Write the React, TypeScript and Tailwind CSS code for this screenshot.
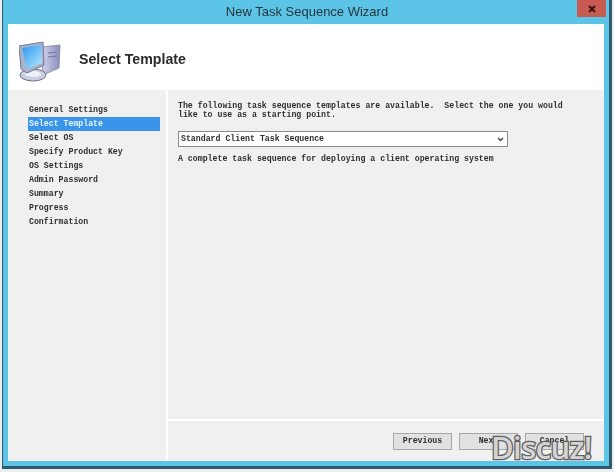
import React from "react";

const steps = ["General Settings", "Select Template", "Select OS", "Specify Product Key", "OS Settings", "Admin Password", "Summary", "Progress", "Confirmation"];

function ComputerIcon() {
  return (
    <svg width="42" height="42" viewBox="0 0 42 42" className="shrink-0">
      <defs>
        <linearGradient id="scr" x1="0" y1="0" x2="1" y2="1">
          <stop offset="0" stopColor="#2f92f2" />
          <stop offset="0.6" stopColor="#7cc8fb" />
          <stop offset="1" stopColor="#c6ecfd" />
        </linearGradient>
        <linearGradient id="tw" x1="0" y1="0" x2="1" y2="0">
          <stop offset="0" stopColor="#d4d6ee" />
          <stop offset="1" stopColor="#8a8dbc" />
        </linearGradient>
      </defs>
      <path d="M22 6 L41 4 L40 27 L24 34 Z" fill="url(#tw)" stroke="#7f86a6" strokeWidth="0.8" />
      <path d="M29 12 L38 11 M29 16 L38 15" stroke="#6f74a0" strokeWidth="1.2" />
      <ellipse cx="14" cy="34" rx="13" ry="6" fill="#c9cfe0" stroke="#6d7388" strokeWidth="1" />
      <ellipse cx="14" cy="33" rx="8" ry="3" fill="#eef1f8" />
      <path d="M0 5 L24 1 L25 24 L8 32 L2 28 Z" fill="#aab3cc" stroke="#6d7a99" strokeWidth="1" />
      <path d="M3 7 L22 4 L23 22 L8 28 Z" fill="url(#scr)" />
    </svg>
  );
}

export default function App() {
  return (
    <div className="relative w-[614px] h-[472px] bg-[#eceff0] overflow-hidden font-['Liberation_Mono',monospace] text-[8.22px] font-bold text-[#2e2e2e]">
      <div className="ml-[2px] w-[610px] h-[469px] flex flex-col bg-[#5cc4e6] border-r-[3px] border-b-[3px] border-l border-[#2f5a6e] blur-[0.35px]">
        <div className="relative h-[24px] shrink-0 flex items-center justify-center pl-[2px]">
          <span className="font-['Liberation_Sans',sans-serif] text-[13px] font-normal text-[#26363f]">New Task Sequence Wizard</span>
          <div className="absolute right-[3px] top-0 w-[29px] h-[17px] bg-[#c75b52] flex items-center justify-center">
            <svg width="8" height="8" viewBox="0 0 8 8">
              <path d="M1 1 L7 7 M7 1 L1 7" stroke="#3d0f14" strokeWidth="2" />
            </svg>
          </div>
        </div>
        <div className="flex-1 mx-[5px] mb-[5px] flex flex-col min-h-0 bg-[#f0f0f0]">
          <div className="h-[66px] shrink-0 bg-white flex items-center pl-[11px] pt-[10px] gap-[18px]">
            <ComputerIcon />
            <span className="font-['Liberation_Sans',sans-serif] text-[14.2px] font-bold text-[#2b2b2b] -mt-[5px]">Select Template</span>
          </div>
          <div className="flex-1 flex min-h-0">
            <div className="w-[158px] shrink-0 bg-[#f0f0f0] pt-[13px] pl-[20px] pr-[6px] flex flex-col">
              {steps.map((s, i) => (
                <div key={s} className={`h-[14px] leading-[13px] pl-[1px] ${i === 1 ? "bg-[#3a95ea] text-[#e6f3ff]" : ""}`}>{s}</div>
              ))}
            </div>
            <div className="w-[2px] bg-white shrink-0" />
            <div className="flex-1 flex flex-col min-w-0">
              <div className="h-[329px] shrink-0 pt-[11px] pl-[10px]">
                <p className="w-[395px] leading-[9px] whitespace-pre-wrap">The following task sequence templates are available.  Select the one you would like to use as a starting point.</p>
                <div className="mt-[12px] w-[330px] h-[16px] bg-white border border-[#8a8a8a] flex items-center justify-between pl-[2px] pr-[3px]">
                  <span>Standard Client Task Sequence</span>
                  <svg width="7" height="5" viewBox="0 0 7 5"><path d="M1 1 L3.5 3.5 L6 1" fill="none" stroke="#444" strokeWidth="1.4" /></svg>
                </div>
                <p className="mt-[7px] leading-[10px]">A complete task sequence for deploying a client operating system</p>
              </div>
              <div className="h-[2px] bg-white shrink-0" />
              <div className="flex-1 flex justify-end gap-[7px] pt-[12px] pr-[20px]">
                {["Previous", "Next", "Cancel"].map((b) => (
                  <div key={b} className="w-[59px] h-[17px] bg-[#e1e1e1] border border-[#a8a8a8] flex items-center justify-center">{b}</div>
                ))}
              </div>
            </div>
          </div>
        </div>
      </div>
      <div className="absolute left-[491px] top-[427px] font-['Open_Sans',sans-serif] text-[31px] leading-[40px] tracking-[-0.6px] font-semibold text-[#d4d4d4] [-webkit-text-stroke:2.5px_#5f5f5f] [paint-order:stroke_fill]">Discuz!</div>
    </div>
  );
}
